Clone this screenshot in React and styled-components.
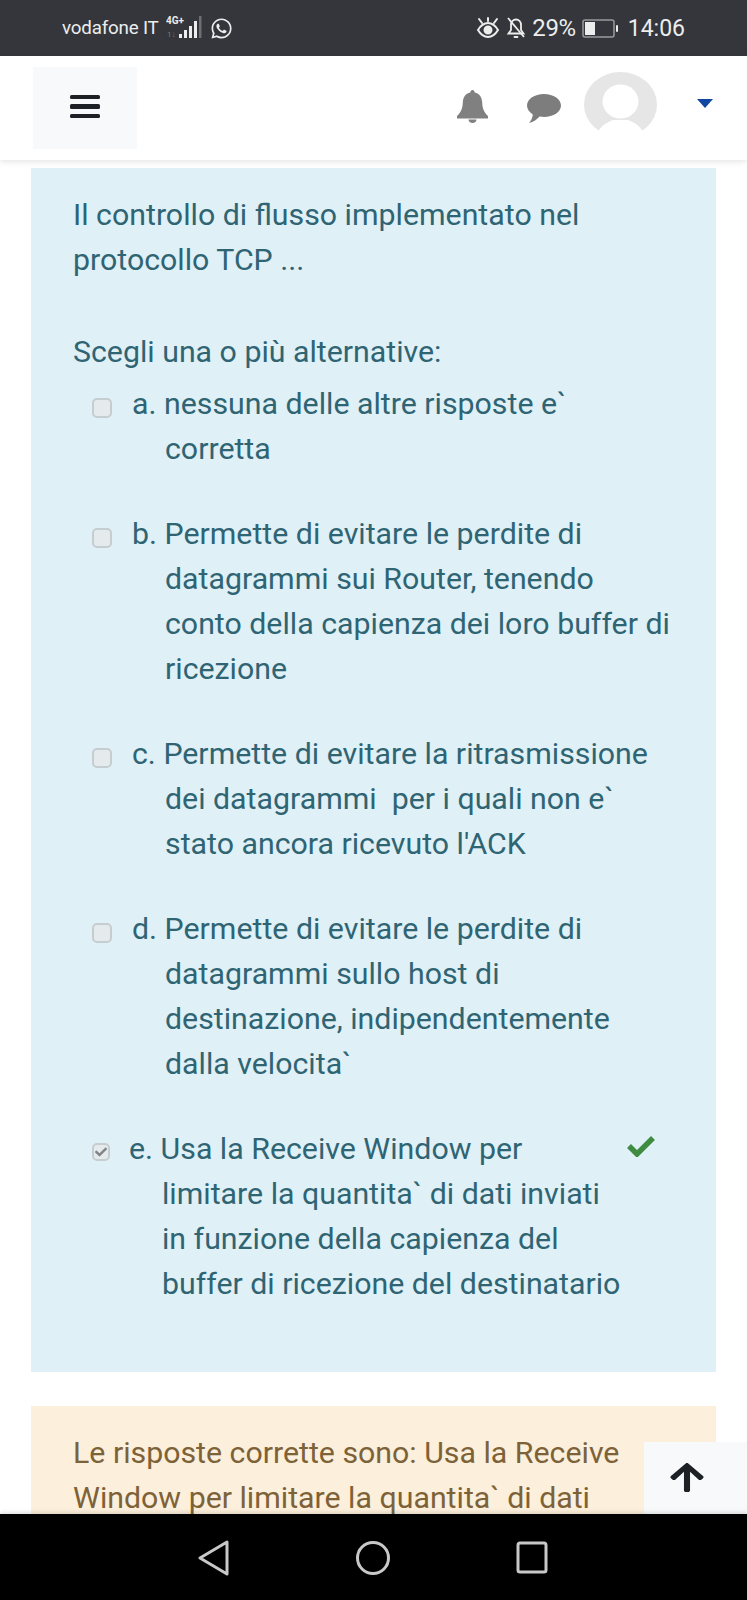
import React from 'react';
import styled, { createGlobalStyle } from 'styled-components';
import { FaArrowUp, FaCheck, FaWhatsapp } from 'react-icons/fa';

const GlobalStyle = createGlobalStyle`
  html, body {
    margin: 0;
    padding: 0;
    background: #fff;
  }
  body {
    font-family: Roboto, "Liberation Sans", sans-serif;
  }
`;

const Page = styled.div`
  position: relative;
  display: flex;
  flex-direction: column;
  width: 747px;
  height: 1600px;
  overflow: hidden;
  background: #fff;
`;

const StatusBar = styled.div`
  display: flex;
  align-items: center;
  justify-content: space-between;
  flex: none;
  height: 56px;
  padding: 0 62px;
  box-sizing: border-box;
  background: #34363b;
  color: #eceded;
`;

const StatusGroup = styled.div`
  display: flex;
  align-items: center;
  gap: ${({ $gap }) => $gap}px;
`;

const Carrier = styled.span`
  font-size: 18.8px;
  letter-spacing: -0.2px;
`;

const Percent = styled.span`
  font-size: 24px;
  letter-spacing: -0.4px;
`;

const Clock = styled.span`
  font-size: 23px;
  margin-left: 4px;
`;

const NavBar = styled.header`
  position: relative;
  z-index: 1;
  display: flex;
  align-items: flex-start;
  flex: none;
  height: 104px;
  padding: 11px 34px 0 33px;
  box-sizing: border-box;
  background: #fff;
  box-shadow: 0 2px 6px rgba(0, 0, 0, 0.1);
`;

const MenuButton = styled.div`
  display: flex;
  flex-direction: column;
  justify-content: center;
  gap: 5px;
  width: 104px;
  height: 82px;
  padding: 0 0 3px 37px;
  box-sizing: border-box;
  background: #f8f9fb;
`;

const MenuLine = styled.span`
  display: block;
  width: 30px;
  height: 4.5px;
  border-radius: 1.5px;
  background: #1d2125;
`;

const NavIcons = styled.div`
  display: flex;
  align-items: flex-start;
  margin-left: auto;
`;

const NavBell = styled.svg`
  width: 31px;
  height: 33px;
  margin-top: 23px;
`;

const NavChat = styled.svg`
  width: 34px;
  height: 29px;
  margin: 27px 0 0 39px;
`;

const Avatar = styled.svg`
  width: 73px;
  height: 65px;
  margin: 5px 0 0 23px;
`;

const Caret = styled.span`
  width: 0;
  height: 0;
  margin: 32px 0 0 40px;
  border-left: 8.5px solid transparent;
  border-right: 8.5px solid transparent;
  border-top: 9px solid #0f47a1;
`;

const Content = styled.main`
  display: flex;
  flex-direction: column;
  gap: 34px;
  padding: 8px 31px 0;
`;

const Alert = styled.section`
  flex: none;
  padding: ${({ $bottom }) => `24px 41px ${$bottom}px 42px`};
  background: ${({ $bg }) => $bg};
  color: ${({ $fg }) => $fg};
  font-size: 30.3px;
  line-height: 45px;
`;

const Prompt = styled.div`
  margin-bottom: 47px;
`;

const Hint = styled.div`
  margin-bottom: 7px;
`;

const AnswerList = styled.div`
  display: flex;
  flex-direction: column;
  gap: 40px;
`;

const AnswerRow = styled.div`
  display: flex;
  align-items: flex-start;
  padding-left: 19px;
`;

const CheckBox = styled.span`
  display: flex;
  align-items: center;
  justify-content: center;
  flex: none;
  width: ${({ $checked }) => ($checked ? 18 : 20)}px;
  height: ${({ $checked }) => ($checked ? 18 : 20)}px;
  margin-top: 17px;
  margin-right: ${({ $checked }) => ($checked ? 19 : 20)}px;
  box-sizing: border-box;
  border: 2px solid #c6cdd0;
  border-radius: 5px;
  background: #e5eaec;
  color: #808486;
`;

const AnswerText = styled.div`
  flex: 1;
  padding-left: 33px;
  text-indent: -33px;
`;

const AnswerMark = styled.svg`
  flex: none;
  width: 28px;
  height: 22px;
  margin: 9px 20px 0 2px;
`;

const BottomBar = styled.div`
  position: absolute;
  left: 0;
  right: 0;
  bottom: 0;
  z-index: 3;
  display: flex;
  align-items: center;
  height: 86px;
  background: #000;
  box-shadow: 0 -2px 4px rgba(0, 0, 0, 0.12);
`;

const NavKey = styled.svg`
  position: absolute;
  top: 26px;
  left: ${({ $left }) => $left}px;
  width: 36px;
  height: 36px;
`;

const ToTop = styled.div`
  position: absolute;
  right: 0;
  bottom: 86px;
  z-index: 2;
  display: flex;
  align-items: flex-start;
  justify-content: center;
  width: 103px;
  height: 72px;
  padding: 19px 18px 0 0;
  box-sizing: border-box;
  background: #f8f9fb;
  color: #1d2125;
`;

const ToTopIcon = styled(FaArrowUp)`
  width: 34px;
  height: 33px;
`;

const answers = [
  { letter: 'a', text: 'nessuna delle altre risposte e` corretta' },
  {
    letter: 'b',
    text: 'Permette di evitare le perdite di datagrammi sui Router, tenendo conto della capienza dei loro buffer di ricezione',
  },
  {
    letter: 'c',
    text: "Permette di evitare la ritrasmissione dei datagrammi\u00a0 per i quali non e` stato ancora ricevuto l'ACK",
  },
  {
    letter: 'd',
    text: 'Permette di evitare le perdite di datagrammi sullo host di destinazione, indipendentemente dalla velocita`',
  },
  {
    letter: 'e',
    checked: true,
    text: 'Usa la Receive Window per limitare la quantita` di dati inviati in funzione della capienza del buffer di ricezione del destinatario',
  },
];

const SignalIcon = () => (
  <svg width="37" height="26" viewBox="0 0 37 26">
    <text x="0" y="9" fontFamily="Roboto" fontWeight="700" fontSize="10" fill="#eceded">4G+</text>
    <text x="1" y="22" fontFamily="Roboto" fontSize="8" fill="#77797c">1↓</text>
    <rect x="13" y="19" width="3" height="4" fill="#eceded" />
    <rect x="18" y="15" width="3" height="8" fill="#eceded" />
    <rect x="23" y="11" width="3" height="12" fill="#eceded" />
    <rect x="28" y="6" width="3" height="17" fill="#eceded" />
    <rect x="33" y="1" width="2.5" height="22" fill="#6c6e71" />
  </svg>
);

const EyeIcon = () => (
  <svg width="24" height="22" viewBox="0 0 24 22" fill="none" stroke="#eceded" strokeWidth="2">
    <path d="M2 13c3-5 6.500-7 10-7s7 2 10 7c-3 5-6.500 7-10 7s-7-2-10-7z" />
    <circle cx="12" cy="13" r="3.500" fill="#eceded" />
    <path d="M3 2l3 4M12 1v3M21 2l-3 4" strokeLinecap="round" />
  </svg>
);

const BellOffIcon = () => (
  <svg width="20" height="22" viewBox="0 0 20 22" fill="none" stroke="#eceded" strokeWidth="1.800">
    <path d="M5 8c0-3 2-5.500 5-5.500S15 5 15 8v5l2.500 3.500h-15L5 13z" />
    <path d="M8.500 20h3" strokeLinecap="round" />
    <path d="M2 1l16 19" />
  </svg>
);

const BatteryIcon = () => (
  <svg width="36" height="19" viewBox="0 0 36 19">
    <rect x="1" y="1" width="31" height="17" rx="2" fill="none" stroke="#9a9b9d" strokeWidth="1.500" />
    <rect x="3" y="3" width="10" height="13" fill="#eceded" />
    <rect x="34" y="6" width="2" height="7" rx="1" fill="#eceded" />
  </svg>
);

const App = () => (
  <Page>
    <GlobalStyle />
    <StatusBar>
      <StatusGroup $gap={7}>
        <Carrier>vodafone IT</Carrier>
        <SignalIcon />
        <FaWhatsapp size={23} />
      </StatusGroup>
      <StatusGroup $gap={6}>
        <EyeIcon />
        <BellOffIcon />
        <Percent>29%</Percent>
        <BatteryIcon />
        <Clock>14:06</Clock>
      </StatusGroup>
    </StatusBar>
    <NavBar>
      <MenuButton>
        <MenuLine />
        <MenuLine />
        <MenuLine />
      </MenuButton>
      <NavIcons>
        <NavBell viewBox="0 0 31 33" fill="#808080">
          <path d="M15.500 0c1.300 0 2.200 1 2.200 2.500 5 1 7.300 5 7.500 10 .2 6 2 10 5.800 13.500v2.500H0V26c3.800-3.500 5.600-7.500 5.800-13.500.2-5 2.500-9 7.500-10C13.300 1 14.200 0 15.500 0z" />
          <path d="M11.500 29.500h8c0 2-1.800 3.500-4 3.500s-4-1.500-4-3.500z" />
        </NavBell>
        <NavChat viewBox="0 0 34 29">
          <path d="M17 0c9.400 0 17 5 17 11.500S26.400 23 17 23c-1.500 0-3 0-4.400-.4C10 25.500 6.500 28 2 29c2-2 3.500-5 3.800-8.500C2.300 18.200 0 15 0 11.500 0 5 7.600 0 17 0z" fill="#7d7d7d" />
        </NavChat>
        <Avatar viewBox="0 0 73 65">
          <ellipse cx="36.500" cy="32.500" rx="36.500" ry="32.500" fill="#e6e6e6" />
          <ellipse cx="36.500" cy="29.500" rx="18" ry="17" fill="#fff" />
          <path d="M12 65c2-9 9-14 17-17h15c8 3 15 8 17 17z" fill="#fff" />
        </Avatar>
        <Caret />
      </NavIcons>
    </NavBar>
    <Content>
      <Alert $bg="#dff0f7" $fg="#2f6473" $bottom={66}>
        <Prompt>Il controllo di flusso implementato nel protocollo TCP ...</Prompt>
        <Hint>Scegli una o più alternative:</Hint>
        <AnswerList>
          {answers.map(({ letter, text, checked }) => (
            <AnswerRow key={letter}>
              <CheckBox $checked={checked}>
                {checked && <FaCheck size={12} />}
              </CheckBox>
              <AnswerText>
                {letter}. {text}
              </AnswerText>
              {checked && (
                <AnswerMark viewBox="0 0 28 22" fill="none" stroke="#3e8b41" strokeWidth="5.500">
                  <path d="M2 11l8 8L26 3" />
                </AnswerMark>
              )}
            </AnswerRow>
          ))}
        </AnswerList>
      </Alert>
      <Alert $bg="#fcefdc" $fg="#7d6238" $bottom={24}>
        Le risposte corrette sono: Usa la Receive Window per limitare la quantita` di dati inviati
      </Alert>
    </Content>
    <ToTop>
      <ToTopIcon preserveAspectRatio="none" />
    </ToTop>
    <BottomBar>
      <NavKey $left={196} viewBox="0 0 36 36" fill="none" stroke="#c8c8c8" strokeWidth="3" strokeLinejoin="round">
        <path d="M31 2v32L4 18z" />
      </NavKey>
      <NavKey $left={355} viewBox="0 0 36 36" fill="none" stroke="#c8c8c8" strokeWidth="3">
        <circle cx="18" cy="18" r="15.500" />
      </NavKey>
      <NavKey $left={514} viewBox="0 0 36 36" fill="none" stroke="#c8c8c8" strokeWidth="3" strokeLinejoin="round">
        <rect x="4" y="3" width="28" height="29" rx="2" />
      </NavKey>
    </BottomBar>
  </Page>
);

export default App;
